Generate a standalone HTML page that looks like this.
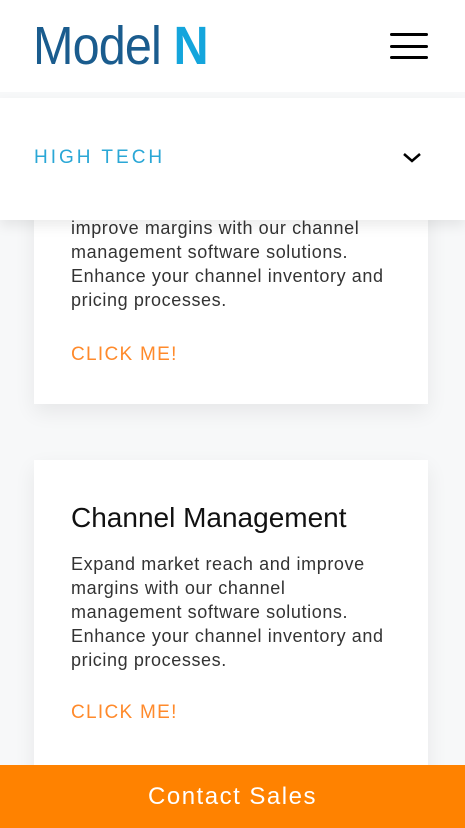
<!DOCTYPE html>
<html><head><style>
*{margin:0;padding:0;box-sizing:border-box}
body{width:465px;height:828px;overflow:hidden;background:#f7f8f9;font-family:"Liberation Sans",sans-serif;position:relative}
.hdr{position:absolute;top:0;left:0;width:465px;height:92px;background:#fff}
.logo{position:absolute;left:33px;top:16px;font-size:54px;color:#1a5c8e;font-family:"Liberation Sans Narrow","Liberation Sans",sans-serif;transform:scaleX(0.9);transform-origin:left;letter-spacing:-1px;line-height:60px;white-space:nowrap}
.logo b{color:#14a5dc}
.ham{position:absolute;left:390px;width:38px;height:3px;background:#000;border-radius:2px}
.dd{position:absolute;top:98px;left:0;width:465px;height:122px;background:#fff;box-shadow:0 6px 12px rgba(0,0,0,.08);z-index:2}
.dd span{position:absolute;left:34px;top:49px;font-size:19px;letter-spacing:3px;color:#2aa7d6}
.card{position:absolute;left:34px;width:394px;background:#fff;box-shadow:0 8px 20px rgba(0,0,0,.07)}
.card p{position:absolute;left:37px;white-space:nowrap;font-size:18px;line-height:24px;color:#333;font-weight:300;letter-spacing:0.6px}
.card h2{position:absolute;left:37px;font-size:28px;font-weight:400;color:#111}
.cm{position:absolute;left:37px;font-size:19px;letter-spacing:1.3px;color:#ff8a2b}
.cs{position:absolute;left:0;top:765px;width:465px;height:63px;background:#ff8200;color:#fff;font-size:24px;letter-spacing:1.5px;text-align:center;line-height:63px;z-index:3}
</style></head><body>
<div class="hdr"><div class="logo">Model <b>N</b></div>
<div class="ham" style="top:33px"></div><div class="ham" style="top:45px"></div><div class="ham" style="top:56px"></div></div>
<div class="dd"><span>HIGH TECH</span>
<svg style="position:absolute;left:402px;top:54px" width="20" height="12" viewBox="0 0 20 12"><path d="M2 2 L10 9 L18 2" fill="none" stroke="#000" stroke-width="2.5"/></svg></div>
<div class="card" style="top:150px;height:254px">
<p style="top:42px">Expand market reach and<br>improve margins with our channel<br>management software solutions.<br>Enhance your channel inventory and<br>pricing processes.</p>
<div class="cm" style="top:194px">CLICK ME!</div></div>
<div class="card" style="top:460px;height:320px">
<h2 style="top:42px">Channel Management</h2>
<p style="top:92px">Expand market reach and improve<br>margins with our channel<br>management software solutions.<br>Enhance your channel inventory and<br>pricing processes.</p>
<div class="cm" style="top:242px">CLICK ME!</div></div>
<div class="cs">Contact Sales</div>
</body></html>
